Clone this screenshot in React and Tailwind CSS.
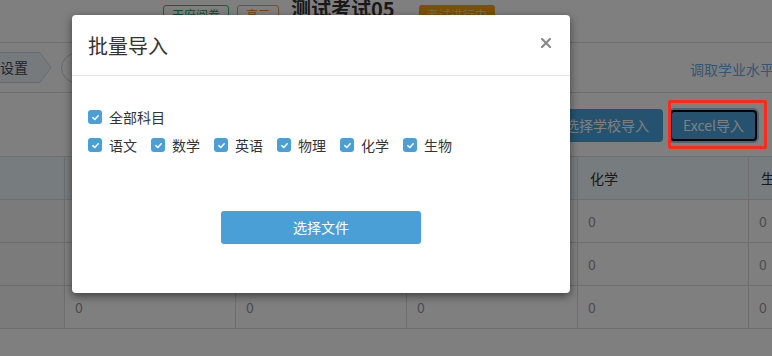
import React from "react";

const font = { fontFamily: '"Noto Sans CJK SC", "Noto Sans", sans-serif' };

function Check({ label }) {
  return (
    <label className="flex items-center gap-[7px] text-[14px] text-[#333] leading-none">
      <span className="w-[14px] h-[14px] rounded-[3px] bg-[#4a9fd6] flex items-center justify-center">
        <svg width="9" height="9" viewBox="0 0 10 10">
          <path d="M2 5.2 L4.2 7.2 L8 3" stroke="white" strokeWidth="1.7" fill="none" strokeLinecap="round" strokeLinejoin="round" />
        </svg>
      </span>
      <span>{label}</span>
    </label>
  );
}

export default function App() {
  const cols = ["", "", "", "", "化学", "生物"];
  return (
    <div className="relative w-[772px] h-[356px] overflow-hidden bg-white" style={font}>
      {/* underlying page */}
      <div className="flex flex-col">
        <div className="h-[46px] -mt-[3px] border-b border-[#dcdcdc] flex items-start pl-[163px]">
          <span className="mt-[8px] h-[20px] px-[8px] border border-[#3cb878] text-[#2a9a5c] text-[12px] rounded-[3px] leading-[18px]">天府阅卷</span>
          <span className="ml-[8px] mt-[8px] h-[20px] px-[8px] border border-[#f0a040] text-[#e08a20] text-[12px] rounded-[3px] leading-[18px]">高三</span>
          <span className="ml-[12px] text-[20px] font-bold text-[#333] leading-[24px] whitespace-nowrap">测试考试05</span>
          <span className="ml-[24px] mt-[8px] h-[20px] px-[8px] bg-[#ff9e00] text-[#f4d8b0] text-[12px] rounded-[3px] leading-[20px]">考试进行中</span>
        </div>
        <div className="h-[50px] border-b border-[#dcdcdc] flex items-center">
          <div className="flex items-center">
            <div className="relative h-[31px] w-[52px] flex items-center text-[14px] text-[#3a4a5a]">
              <svg className="absolute inset-0" width="52" height="31" viewBox="0 0 52 31">
                <path d="M-2 0.5 H40 L51 15.5 L40 30.5 H-2 Z" fill="#eef4f9" stroke="#d0d8e0" strokeWidth="1" />
              </svg>
              <span className="relative">设置</span>
            </div>
            <div className="ml-[9px] w-[30px] h-[30px] rounded-full border border-[#c8d2dc]" />
          </div>
          <div className="ml-auto pt-[4px] text-[14px] text-[#6aaee6] whitespace-nowrap w-[82px] overflow-hidden">调取学业水平</div>
        </div>
        <div className="h-[63px] flex items-center justify-end gap-[7px] pr-[15px] pt-[2px]">
          <button className="h-[33px] w-[112px] rounded-[4px] bg-[#4aa6de] text-white text-[14px]">选择学校导入</button>
          <button className="h-[31px] w-[87px] rounded-[4px] bg-[#4aa6de] text-white text-[14px] border-2 border-black shadow-[0_0_0_2px_#9cc8e8]">Excel导入</button>
        </div>
        <div className="grid grid-cols-[65px_171px_171px_171px_171px_171px] text-[14px]">
          {cols.map((c, i) => (
            <div key={i} className="h-[44px] bg-[#eef8fe] border-t border-b border-r border-[#dcdcdc] flex items-center pl-[12px] text-[#333] whitespace-nowrap">{c}</div>
          ))}
          {[0, 1, 2].map((r) =>
            cols.map((c, i) => (
              <div key={r + "-" + i} className={"h-[43px] border-b border-r border-[#dcdcdc] flex items-center pl-[10px] text-[#999] " + (i === 0 ? "bg-[#f6f6f6]" : "")}>
                {i === 0 ? "" : "0"}
              </div>
            ))
          )}
        </div>
      </div>

      {/* overlay */}
      <div className="absolute inset-0 bg-black/50" />

      {/* red annotation */}
      <div className="absolute left-[668px] top-[100px] w-[99px] h-[49px] border-[3px] border-[#ff2a1a] rounded-[2px]" />

      {/* modal */}
      <div className="absolute left-[72px] top-[15px] w-[498px] h-[278px] bg-white rounded-[4px] shadow-[0_3px_9px_rgba(0,0,0,0.5)] flex flex-col">
        <div className="h-[61px] border-b border-[#e5e5e5] flex items-center justify-between pl-[16px] pr-[19px] pt-[2px]">
          <span className="text-[20px] text-[#333]">批量导入</span>
          <svg width="10" height="10" viewBox="0 0 10 10" className="-mt-[6px]">
            <path d="M1 1 L9 9 M9 1 L1 9" stroke="#8a8a8a" strokeWidth="2.2" strokeLinecap="square" />
          </svg>
        </div>
        <div className="flex flex-col pl-[16px] pt-[34px]">
          <Check label="全部科目" />
          <div className="flex mt-[14px]">
            {["语文", "数学", "英语", "物理", "化学", "生物"].map((s) => (
              <div key={s} className="w-[63px]"><Check label={s} /></div>
            ))}
          </div>
          <div className="flex justify-center pr-[16px] mt-[59px]">
            <button className="w-[200px] h-[33px] rounded-[3px] bg-[#4a9fd6] text-white text-[14px]">选择文件</button>
          </div>
        </div>
      </div>
    </div>
  );
}
